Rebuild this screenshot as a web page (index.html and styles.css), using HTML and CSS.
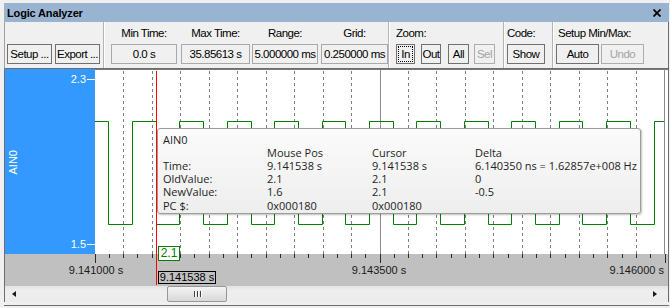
FILE: index.html
```html
<!DOCTYPE html>
<html>
<head>
<meta charset="utf-8">
<title>Logic Analyzer</title>
<link rel="stylesheet" href="styles.css">
</head>
<body>
<div class="window">
  <div class="titlebar">
    <span class="title">Logic Analyzer</span>
    <svg class="close" width="8" height="8" viewBox="0 0 8 8"><path d="M0.5 0.5L7.5 7.5M7.5 0.5L0.5 7.5" stroke="#000" stroke-width="1.8"/></svg>
  </div>
  <div class="toolbar">
    <div class="group g-file">
      <div class="row">
        <button class="btn w-setup">Setup ...</button>
        <button class="btn w-export">Export ...</button>
      </div>
    </div>
    <div class="sep"></div>
    <div class="group g-fields">
      <div class="field f-min"><div class="lbl">Min Time:</div><div class="val">0.0 s</div></div>
      <div class="field f-max"><div class="lbl">Max Time:</div><div class="val">35.85613 s</div></div>
      <div class="field f-range"><div class="lbl">Range:</div><div class="val">5.000000 ms</div></div>
      <div class="field f-grid"><div class="lbl">Grid:</div><div class="val">0.250000 ms</div></div>
    </div>
    <div class="sep"></div>
    <div class="group g-zoom">
      <div class="lbl">Zoom:</div>
      <div class="row">
        <button class="btn w-in focus">In</button>
        <button class="btn w-out">Out</button>
        <button class="btn w-all">All</button>
        <button class="btn w-sel" disabled>Sel</button>
      </div>
    </div>
    <div class="sep"></div>
    <div class="group g-code">
      <div class="lbl">Code:</div>
      <div class="row"><button class="btn w-show">Show</button></div>
    </div>
    <div class="sep"></div>
    <div class="group g-minmax">
      <div class="lbl">Setup Min/Max:</div>
      <div class="row">
        <button class="btn w-auto">Auto</button>
        <button class="btn w-undo" disabled>Undo</button>
      </div>
    </div>
  </div>
  <div class="content">
    <div class="upper">
      <div class="chan">
        <div class="scale">2.3</div>
        <div class="chan-name">AIN0</div>
        <div class="scale">1.5</div>
      </div>
      <svg class="plot" width="573" height="185" viewBox="0 0 573 185">
        <rect x="0" y="0" width="573" height="185" fill="#fff"/>
        <path d="M0 0.5H573" stroke="#7a7a7a" stroke-width="1"/>
        <path d="M569.5 0V185" stroke="#8a8a8a" stroke-width="1"/>
        <path stroke="#7f7f7f" stroke-width="1" stroke-dasharray="3 3" stroke-dashoffset="-1"
          d="M28.5 1V185M57.5 1V185M85.5 1V185M114.5 1V185M142.5 1V185M171.5 1V185M199.5 1V185M228.5 1V185M256.5 1V185M313.5 1V185M341.5 1V185M370.5 1V185M398.5 1V185M427.5 1V185M455.5 1V185M484.5 1V185M512.5 1V185M541.5 1V185"/>
        <path d="M285.5 1V185" stroke="#8c8c8c" stroke-width="1"/>
        <path fill="none" stroke="#008000" stroke-width="1"
          d="M0 52.5H13.5V155.5H37.5V52.5H61.5V155.5H84.5V52.5H108.5V155.5H132.5V52.5H156.5V155.5H179.5V52.5H203.5V155.5H227.5V52.5H250.5V155.5H274.5V52.5H298.5V155.5H321.5V52.5H345.5V155.5H369.5V52.5H393.5V155.5H416.5V52.5H440.5V155.5H464.5V52.5H487.5V155.5H511.5V52.5H535.5V155.5H559.5V52.5H569"/>
        <path d="M61.5 2V185" stroke="#ff0000" stroke-width="1"/>
      </svg>
    </div>
    <div class="axis">
      <svg width="663" height="32" viewBox="0 0 663 32">
        <path stroke="#2a2a2a" stroke-width="1"
          d="M90.5 0v9M375.5 0v9M660.5 0v9M104.5 0v4M118.5 0v4M132.5 0v4M147.5 0v4M161.5 0v4M175.5 0v4M189.5 0v4M204.5 0v4M218.5 0v4M232.5 0v4M246.5 0v4M261.5 0v4M275.5 0v4M289.5 0v4M303.5 0v4M318.5 0v4M332.5 0v4M346.5 0v4M360.5 0v4M389.5 0v4M403.5 0v4M417.5 0v4M431.5 0v4M446.5 0v4M460.5 0v4M474.5 0v4M488.5 0v4M503.5 0v4M517.5 0v4M531.5 0v4M545.5 0v4M560.5 0v4M574.5 0v4M588.5 0v4M602.5 0v4M617.5 0v4M631.5 0v4M645.5 0v4"/>
        <text class="axis-text" x="91" y="20" text-anchor="middle">9.141000 s</text>
        <text class="axis-text" x="374" y="20" text-anchor="middle">9.143500 s</text>
        <text class="axis-text" x="659" y="20" text-anchor="end">9.146000 s</text>
        <path d="M151.5 0V31" stroke="#ff0000" stroke-width="1"/>
      </svg>
    </div>
    <div class="scrollbar">
      <div class="sb-btn"><span class="arrow-left"></span></div>
      <div class="sb-track">
        <div class="sb-thumb"><span class="grip"></span><span class="grip"></span><span class="grip"></span></div>
      </div>
      <div class="sb-btn"><span class="arrow-right"></span></div>
    </div>

    <div class="cursor-value">2.1</div>
    <div class="cursor-time">9.141538 s</div>

    <div class="tooltip">
      <div class="tt-grid">
        <div class="tt-title">AIN0</div>
        <div></div><div>Mouse Pos</div><div>Cursor</div><div>Delta</div>
        <div>Time:</div><div>9.141538 s</div><div>9.141538 s</div><div>6.140350 ns = 1.62857e+008 Hz</div>
        <div>OldValue:</div><div>2.1</div><div>2.1</div><div>0</div>
        <div>NewValue:</div><div>1.6</div><div>2.1</div><div>-0.5</div>
        <div>PC $:</div><div>0x000180</div><div>0x000180</div><div></div>
      </div>
    </div>
  </div>
</div>
</body>
</html>
```

FILE: styles.css
```css
* { box-sizing: border-box; }

html, body {
  margin: 0;
  padding: 0;
  background: #f0f0f0;
}

body {
  width: 670px;
  height: 308px;
  overflow: hidden;
  font-family: "Liberation Sans", Arial, sans-serif;
}

.window {
  width: 665px;
  margin: 3px 0 0 4px;
  background: #f0f0f0;
  border-bottom: 1px solid #6d6d6d;
  padding-bottom: 3px;
}

/* title bar */
.titlebar {
  height: 19px;
  background: #99b4d1;
  display: flex;
  align-items: center;
  justify-content: space-between;
  padding: 0 8px 0 3px;
}

.title {
  font-weight: bold;
  font-size: 11px;
  letter-spacing: -0.15px;
  color: #000;
}

.close { display: block; margin-top: 1px; }

/* toolbar */
.toolbar {
  height: 47px;
  display: flex;
  border-left: 1px solid #a0a0a0;
  border-right: 1px solid #6d6d6d;
  border-bottom: 1px solid #6d6d6d;
  font-family: "Liberation Sans", Arial, sans-serif;
  font-size: 11.5px;
  letter-spacing: -0.5px;
  color: #000;
}

.group {
  display: flex;
  flex-direction: column;
  justify-content: flex-end;
  padding-bottom: 4px;
}

.row { display: flex; }

.lbl {
  height: 22px;
  line-height: 22px;
  white-space: nowrap;
}

.sep {
  width: 2px;
  border-left: 1px solid #b4b4b4;
  border-right: 1px solid #ffffff;
}

.btn {
  height: 20px;
  padding: 0;
  margin: 0;
  border: 1px solid #707070;
  background: #f0f0f0;
  font: inherit;
  letter-spacing: inherit;
  color: #000;
  line-height: 17px;
  text-align: center;
  white-space: nowrap;
  overflow: visible;
}

.btn:disabled {
  color: #a3a3a3;
  border-color: #adadad;
}

.btn.focus {
  outline: 1px dotted #000;
  outline-offset: -3px;
}

.g-file { width: 98px; padding-left: 2px; }
.w-setup { width: 45px; margin-right: 3px; }
.w-export { width: 45px; }

.g-fields {
  width: 283px;
  flex-direction: row;
  align-items: flex-end;
  padding-left: 3px;
}

.field {
  display: flex;
  flex-direction: column;
  align-items: center;
}

.val {
  height: 20px;
  line-height: 18px;
  border: 1px solid #a9a9a9;
  background: #f0f0f0;
  text-align: center;
  white-space: nowrap;
}

.f-min .val { width: 66px; }
.f-max { margin-left: 4px; }
.f-max .val { width: 69px; }
.f-range { margin-left: 2px; }
.f-range .val { width: 66px; }
.f-grid { margin-left: 3px; }
.f-grid .val { width: 67px; }

.g-zoom { width: 113px; padding-left: 6px; }
.w-in { width: 19px; }
.w-out { width: 20px; margin-left: 6px; }
.w-all { width: 21px; margin-left: 7px; }
.w-sel { width: 21px; margin-left: 5px; }

.g-code { width: 47px; padding-left: 2px; }
.w-show { width: 38px; }

.g-minmax { flex: 1; padding-left: 2px; }
.g-minmax .lbl { padding-left: 2px; }
.w-auto { width: 43px; }
.w-undo { width: 43px; margin-left: 2px; }

/* content */
.content {
  position: relative;
  border-left: 1px solid #6d6d6d;
  border-right: 1px solid #6d6d6d;
}

.upper {
  display: flex;
  height: 185px;
}

.chan {
  width: 90px;
  background: #3399ff;
  display: flex;
  flex-direction: column;
  justify-content: space-between;
  padding: 4px 0 3px;
  color: #fff;
  font-size: 11px;
}

.scale {
  height: 13px;
  line-height: 13px;
  display: flex;
  justify-content: flex-end;
  align-items: center;
  gap: 1px;
}

.scale::after {
  content: "";
  width: 8px;
  height: 1px;
  background: #fff;
}

.chan-name {
  align-self: flex-start;
  margin-left: 3px;
  writing-mode: vertical-rl;
  transform: rotate(180deg);
  line-height: 11px;
  font-size: 11px;
}

.plot { display: block; }

.axis {
  height: 32px;
  background: #c0c0c0;
}

.axis svg { display: block; }

.axis-text {
  font-family: "Liberation Sans", Arial, sans-serif;
  font-size: 11px;
  fill: #1a1a1a;
}

/* scrollbar */
.scrollbar {
  height: 16px;
  display: flex;
  background: linear-gradient(#e4e4e4, #eeeeee 30%, #ececec);
  padding-right: 5px;
}

.sb-btn {
  width: 17px;
  display: flex;
  align-items: center;
  justify-content: center;
}

.arrow-left, .arrow-right {
  width: 0;
  height: 0;
  border-top: 3.5px solid transparent;
  border-bottom: 3.5px solid transparent;
}

.arrow-left { border-right: 4px solid #1a1a1a; }
.arrow-right { border-left: 4px solid #1a1a1a; }

.sb-track {
  flex: 1;
  display: flex;
}

.sb-thumb {
  width: 60px;
  height: 16px;
  margin-left: 145px;
  border: 1px solid #979797;
  border-radius: 2px;
  background: linear-gradient(#f5f5f5, #e6e6e6 50%, #d8d8d8);
  display: flex;
  align-items: center;
  justify-content: center;
  gap: 2px;
}

.grip {
  width: 1px;
  height: 6px;
  background: #404040;
  box-shadow: 1px 0 0 #ffffff;
}

/* cursor labels */
.cursor-value {
  position: absolute;
  left: 153px;
  top: 177px;
  width: 22px;
  height: 15px;
  border: 1px solid #008000;
  background: #fff;
  color: #008000;
  font-size: 12px;
  line-height: 13px;
  text-align: center;
}

.cursor-time {
  position: absolute;
  left: 153px;
  top: 202px;
  width: 58px;
  height: 13px;
  border: 1px solid #000;
  color: #000;
  font-size: 11px;
  line-height: 11px;
  text-align: center;
}

/* tooltip */
.tooltip {
  position: absolute;
  left: 152px;
  top: 59px;
  width: 484px;
  height: 86px;
  border: 1px solid #9c9c9c;
  border-radius: 3px;
  background: linear-gradient(#fbfbfb, #eeeeee);
  box-shadow: 1px 1px 2px rgba(0, 0, 0, 0.25);
  padding: 4px 0 0 5px;
  font-family: "Open Sans", "Noto Sans", sans-serif;
  font-size: 11px;
  color: #1e1e1e;
}

.tt-grid {
  display: grid;
  grid-template-columns: 104px 105px 103px auto;
  grid-template-rows: repeat(6, 13.2px);
  align-items: center;
  white-space: nowrap;
}

.tt-grid > div {
  line-height: 12px;
  height: 12px;
}

.tt-title { grid-column: 1 / -1; }
```
